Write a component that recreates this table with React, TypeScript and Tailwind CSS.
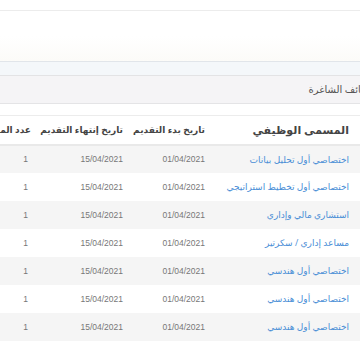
import React from 'react';

const jobs = [
  'اختصاصي أول تحليل بيانات',
  'اختصاصي أول تخطيط استراتيجي',
  'استشاري مالي وإداري',
  'مساعد إداري / سكرتير',
  'اختصاصي أول هندسي',
  'اختصاصي أول هندسي',
  'اختصاصي أول هندسي',
];

const font = { fontFamily: '"Open Sans", "DejaVu Sans", sans-serif' };
const numFont = { fontFamily: '"Liberation Sans", "DejaVu Sans", sans-serif' };

export default function App() {
  return (
    <div className="w-[360px] h-[351px] bg-white overflow-hidden" style={font}>
      <div className="h-[10px]" />
      <div className="h-[51px] border-t border-[#ececec] bg-gradient-to-b from-white via-white to-[#fcfbf8]" />
      <div className="h-[14px] border-t border-[#e1e5ea] bg-[#f4f7fa]" />
      <div className="h-[28px] border-t border-[#e3e3e5] bg-[#f5f4f6] flex items-center overflow-hidden" dir="rtl">
        <span className="-mr-[20px] text-[10px] text-[#555] whitespace-nowrap">الوظائف الشاغرة</span>
      </div>
      <div className="h-[12px] border-t border-[#e4e4e6] bg-white" />
      <div className="overflow-hidden border-t border-[#ececec]" dir="rtl">
        <table className="w-[440px] table-fixed border-collapse text-right">
          <thead>
            <tr className="h-[29px] border-b-2 border-[#e9e9e9]">
              <th className="w-[145px] pr-[11px] text-[11px] font-bold text-[#444] whitespace-nowrap">المسمى الوظيفي</th>
              <th className="w-[82px] pr-[10px] text-[9px] font-bold text-[#444] whitespace-nowrap">تاريخ بدء التقديم</th>
              <th className="w-[92px] pr-[10px] text-[9px] font-bold text-[#444] whitespace-nowrap">تاريخ إنتهاء التقديم</th>
              <th className="w-[121px] pr-[10px] text-[9px] font-bold text-[#444] whitespace-nowrap">عدد المقاعد</th>
            </tr>
          </thead>
          <tbody>
            {jobs.map((job, i) => (
              <tr key={i} className={`h-[28px] ${i % 2 === 0 ? 'bg-[#f5f5f5]' : 'bg-white'}`}>
                <td className="pr-[11px] text-[9px] text-[#4a8ed6] whitespace-nowrap">{job}</td>
                <td className="pr-[10px] text-[8.5px] text-[#777]" style={numFont}>01/04/2021</td>
                <td className="pr-[10px] text-[8.5px] text-[#777]" style={numFont}>15/04/2021</td>
                <td className="pr-[13px] text-[8.5px] text-[#777]" style={numFont}>1</td>
              </tr>
            ))}
          </tbody>
        </table>
      </div>
    </div>
  );
}
